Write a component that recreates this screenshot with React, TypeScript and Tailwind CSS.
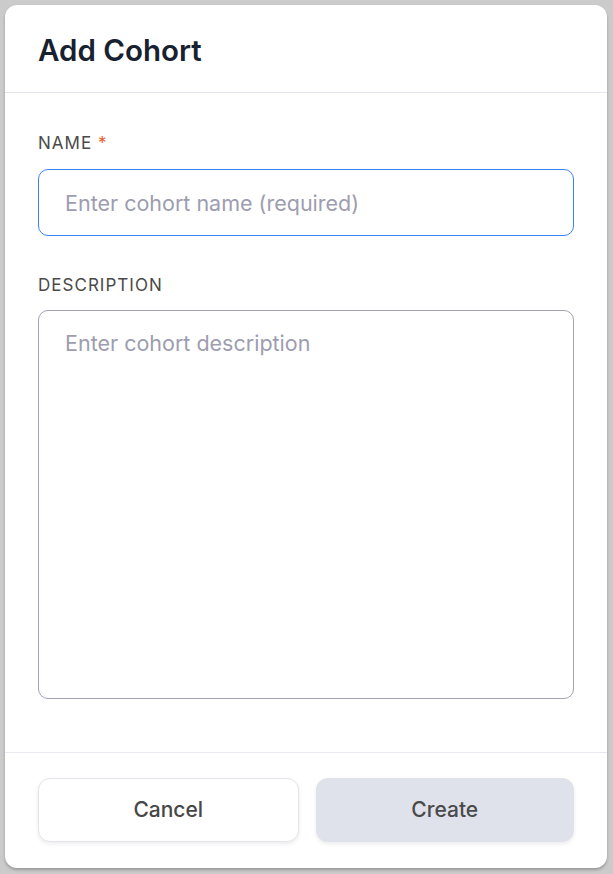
import { useState } from 'react';

const App = () => {
  const [name, setName] = useState('');
  const [description, setDescription] = useState('');

  return (
    <div
      className="min-h-[874px] w-full bg-[#cbcbcb] pt-[5px] pl-[5px] pr-[6px] pb-[6px]"
      style={{ fontFamily: 'Inter, "Noto Sans", sans-serif' }}
    >
      <div className="flex h-[863px] flex-col rounded-[12px] bg-white shadow-[0_2px_3px_rgba(0,0,0,0.25)]">
        <div className="flex h-[88px] shrink-0 items-center border-b border-[#e4e4ea] px-[33px] pt-[4px]">
          <h2 className="text-[29.5px] font-semibold text-[#18212f]">Add Cohort</h2>
        </div>

        <div className="flex flex-1 flex-col px-[33px] pt-[38px]">
          <label className="text-[17px] font-normal uppercase tracking-[0.06em] text-[#4a4a4a] leading-[24px]">
            Name <span className="text-[#ea5a2b]">*</span>
          </label>
          <input
            value={name}
            onChange={(e) => setName(e.target.value)}
            placeholder="Enter cohort name (required)"
            className="mt-[14px] h-[67px] w-full rounded-[10px] border border-[#3b82f6] px-[26px] text-[21.5px] text-[#18212f] outline-none placeholder:text-[#9d9db0]"
          />

          <label className="mt-[37px] text-[17px] font-normal uppercase tracking-[0.06em] text-[#4a4a4a] leading-[24px]">
            Description
          </label>
          <textarea
            value={description}
            onChange={(e) => setDescription(e.target.value)}
            placeholder="Enter cohort description"
            className="mt-[13px] h-[389px] w-full resize-none rounded-[10px] border border-[#a3a3b5] px-[26px] py-[16px] text-[21.5px] text-[#18212f] outline-none placeholder:text-[#9d9db0]"
          />
        </div>

        <div className="flex h-[116px] shrink-0 gap-[17px] border-t border-[#e8e8ef] px-[33px] pt-[25px]">
          <button className="h-[64px] flex-1 rounded-[12px] border border-[#e4e4ec] bg-white text-[21px] font-medium text-[#474747] shadow-[0_2px_4px_rgba(0,0,0,0.08)]">
            Cancel
          </button>
          <button className="h-[64px] flex-1 rounded-[12px] bg-[#dfe2ea] text-[21px] font-medium text-[#4a4a4a] shadow-[0_2px_4px_rgba(0,0,0,0.08)]">
            Create
          </button>
        </div>
      </div>
    </div>
  );
};

export default App;
